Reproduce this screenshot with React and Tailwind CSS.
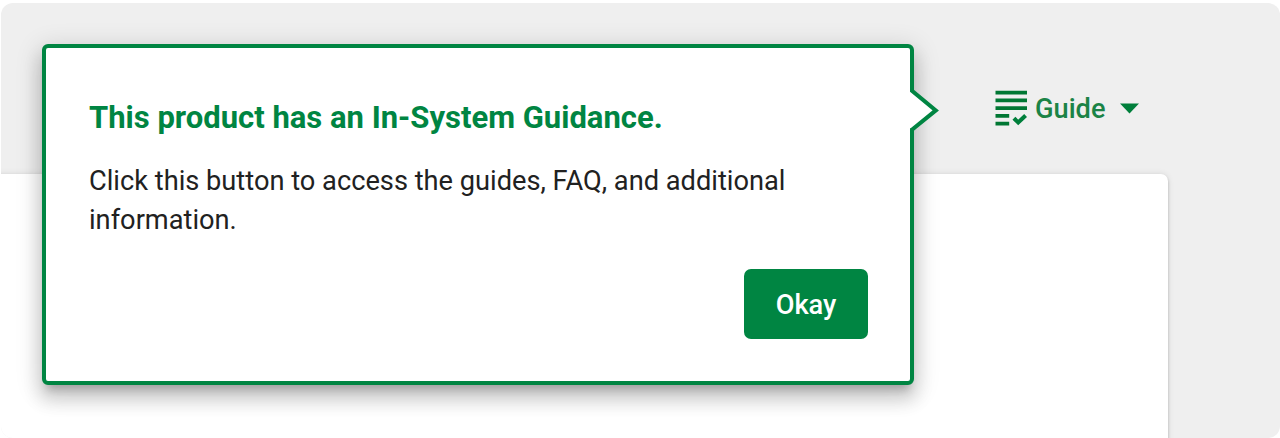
function GuideIcon() {
  return (
    <svg className="block h-9 w-8" viewBox="0 0 32 36" fill="none">
      <path
        d="M0.5 0.8H32V4.6H0.5ZM0.5 8.5H32V12.3H0.5ZM0.5 16.3H32V20.1H0.5ZM0.5 24H14.2V27.8H0.5ZM0.5 31.7H14.2V35.5H0.5Z"
        fill="#007733"
      />
      <path d="M18.9 28.2L23.2 32.4L30.6 25.4" stroke="#007f3b" strokeWidth="4.1" />
    </svg>
  );
}

function GuideButton() {
  return (
    <button className="flex h-9 items-center text-[#1b8346]">
      <GuideIcon />
      <span className="ml-2 w-[71px] pt-0.5 text-left text-[27.2px] leading-9 font-medium whitespace-nowrap">Guide</span>
      <svg className="ml-[14px] block h-[11px] w-[19px]" viewBox="0 0 19 11">
        <path d="M0 0.5H19L9.5 10.5Z" fill="#007f3b" />
      </svg>
    </button>
  );
}

function GuidePopover() {
  return (
    <section className="absolute top-[44px] left-[42px] h-[341px] w-[872px] rounded-[6px] border-4 border-[#008542] bg-white pt-[50px] pr-[42px] pl-[43px] shadow-[0_9px_9px_-5px_rgba(0,0,0,0.2),0_14px_18px_2px_rgba(0,0,0,0.14),0_5px_25px_4px_rgba(0,0,0,0.12)]">
      <h2 className="text-[31px] leading-10 font-bold whitespace-nowrap text-[#008542]">
        This product has an In-System Guidance.
      </h2>
      <p className="mt-[24px] text-[27.23px] leading-[39px] text-[#212121]">
        <span className="block whitespace-nowrap">Click this button to access the guides, FAQ, and additional</span>
        <span className="block">information.</span>
      </p>
      <div className="mt-[29px] flex justify-end">
        <button className="h-[70px] w-[124px] rounded-[7px] bg-[#008542] pt-0.5 text-[27.2px] font-medium text-white">
          Okay
        </button>
      </div>
      <svg className="absolute top-[38px] -right-[31px] h-[50px] w-[32px]" viewBox="0 0 32 50">
        <path d="M0.5 5.5H5.5L27 24.3L5.5 42.5H0.5Z" fill="#fff" />
        <path d="M3 3V4.8L26.8 24.4L3 43.6V45" fill="none" stroke="#008542" strokeWidth="4" />
      </svg>
    </section>
  );
}

export default function App() {
  return (
    <div className="h-[438px] overflow-hidden bg-white pt-[3px] pl-px font-['Roboto',sans-serif]">
      <main className="h-[435px] overflow-hidden rounded-[12px] bg-[#efefef]">
        <header className="flex h-[171px] justify-end pt-[87px] pr-[141px]">
          <GuideButton />
        </header>
        <div className="mr-[112px] -ml-2 h-[280px] rounded-tr-[7px] bg-white shadow-[0_2px_3px_rgba(0,0,0,0.22),0_0_6px_rgba(0,0,0,0.1)]" />
      </main>
      <GuidePopover />
    </div>
  );
}
